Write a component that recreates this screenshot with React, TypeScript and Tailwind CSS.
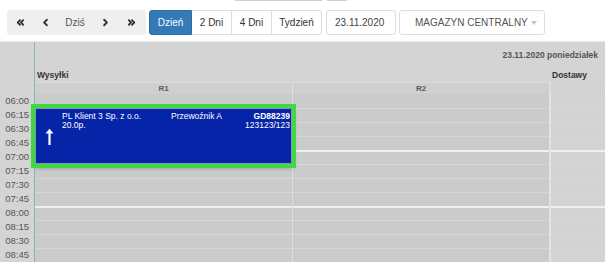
import React from 'react';
import { ChevronLeft, ChevronRight, ChevronsLeft, ChevronsRight } from 'lucide-react';

const slots = ['06:00', '06:15', '06:30', '06:45', '07:00', '07:15', '07:30', '07:45', '08:00', '08:15', '08:30', '08:45'];

const SlotColumn: React.FC<{ bg: string; children?: React.ReactNode; className?: string }> = ({ bg, children, className }) => (
  <div className={`relative ${bg} ${className ?? ''}`}>
    {slots.map((t, i) => (
      <div
        key={t}
        className={`h-[14px] ${i === 0 ? '' : t.endsWith(':00') ? 'border-t-2 border-[#efefef]' : 'border-t border-[#d7d7d7]'}`}
      />
    ))}
    {children}
  </div>
);

const App: React.FC = () => {
  return (
    <div className="w-[605px] h-[262px] overflow-hidden bg-white flex flex-col font-['Liberation_Sans',Arial,sans-serif]">
      {/* cut-off controls above */}
      <div className="h-[10px] flex pl-[235px]">
        <div className="w-[87px] h-px bg-[#cfcfcf]" />
        <div className="ml-[5px] w-[20px] h-px bg-[#cfcfcf]" />
      </div>

      {/* Toolbar */}
      <div className="h-[25px] flex pl-[7px] text-[10px] text-[#333]">
        <div className="flex items-center bg-[#efefef] rounded-[3px] w-[139px]">
          <span className="w-[26px] flex justify-center"><ChevronsLeft size={11} strokeWidth={4} /></span>
          <span className="w-[24px] flex justify-center"><ChevronLeft size={11} strokeWidth={4} /></span>
          <span className="w-[36px] text-center text-[#555]">Dziś</span>
          <span className="w-[24px] flex justify-center"><ChevronRight size={11} strokeWidth={4} /></span>
          <span className="w-[29px] flex justify-center"><ChevronsRight size={11} strokeWidth={4} /></span>
        </div>

        <div className="ml-[3px] flex">
          <div className="w-[43px] flex items-center justify-center bg-[#337ab7] border border-[#2e6da4] text-white rounded-l-[3px]">Dzień</div>
          <div className="w-[40px] flex items-center justify-center bg-white border-y border-r border-[#dddddd]">2 Dni</div>
          <div className="w-[40px] flex items-center justify-center bg-white border-y border-r border-[#dddddd]">4 Dni</div>
          <div className="w-[50px] flex items-center justify-center bg-white border-y border-r border-[#dddddd] rounded-r-[3px]">Tydzień</div>
        </div>

        <div className="ml-[4px] w-[70px] flex items-center pl-[8px] border border-[#dddddd] rounded-[3px] text-[#444]">23.11.2020</div>

        <div className="ml-[3px] w-[146px] flex items-center pl-[15px] border border-[#dddddd] rounded-[3px] text-[#555]">
          MAGAZYN CENTRALNY
          <svg width="6" height="4" viewBox="0 0 6 4" className="ml-[3px]">
            <path d="M0 0 L6 0 L3 4 Z" fill="#c4c4c4" />
          </svg>
        </div>
      </div>

      <div className="h-[6px]" />

      {/* Calendar */}
      <div className="flex-1 flex bg-[#d4d4d4] border-t border-[#e9e9e9]">
        {/* time column */}
        <div className="w-[34px] shrink-0">
          <div className="h-[52px]" />
          {slots.map((t) => (
            <div key={t} className="h-[14px] flex items-center justify-end pr-[5px] text-[9.5px] text-[#555]">
              {t}
            </div>
          ))}
        </div>

        <div className="flex-1 border-l border-[#88b6b6] flex flex-col">
          <div className="h-[26px] flex items-center justify-end pr-[7px] text-[8.5px] font-bold text-[#555]">
            23.11.2020 poniedziałek
          </div>
          <div className="h-[14px] flex items-center text-[8.5px] font-bold text-[#333]">
            <span className="w-[515px] pl-[2px]">Wysyłki</span>
            <span className="pl-[2px]">Dostawy</span>
          </div>
          <div className="h-[12px] flex text-[8px] font-bold text-[#5a5a5a]">
            <div className="w-[257px] flex items-center justify-center bg-[#cfcfcf] border-t border-[#dadada]">R1</div>
            <div className="w-px bg-[#e0e0e0]" />
            <div className="w-[256px] flex items-center justify-center bg-[#cfcfcf] border-t border-[#dadada]">R2</div>
            <div className="w-[2px] bg-[#e0e0e0]" />
            <div className="flex-1 bg-[#d2d2d2]" />
          </div>

          <div className="flex">
            <SlotColumn bg="bg-[#cbcbcb]" className="w-[257px]">
              {/* event */}
              <div className="absolute left-0 right-0 top-[14px] h-[56px] z-10 bg-[#0624a8] border border-[#8d93ad] outline-4 outline-[#3fd83f] shadow-[0_3px_5px_rgba(0,0,0,0.45)] flex text-white text-[8.5px] leading-[9px]">
                <div className="w-[26px] shrink-0 flex items-center justify-center">
                  <svg width="9" height="17" viewBox="0 0 9 17">
                    <path d="M4.5 3 L4.5 17" stroke="white" strokeWidth="2.2" />
                    <path d="M0.5 5.5 L4.5 0.8 L8.5 5.5 Z" fill="white" />
                  </svg>
                </div>
                <div className="flex-1 flex pt-[3px] pr-[1px]">
                  <div className="w-[109px]">
                    <div>PL Klient 3 Sp. z o.o.</div>
                    <div>20.0p.</div>
                  </div>
                  <div className="flex-1">Przewoźnik A</div>
                  <div className="text-right">
                    <div className="font-bold">GD88239</div>
                    <div>123123/123</div>
                  </div>
                </div>
              </div>
            </SlotColumn>
            <div className="w-px bg-[#dedede]" />
            <SlotColumn bg="bg-[#cbcbcb]" className="w-[256px]" />
            <div className="w-[2px] bg-[#e2e2e2]" />
            <SlotColumn bg="bg-[#d3d3d3]" className="flex-1" />
          </div>
        </div>
      </div>
    </div>
  );
};

export default App;
